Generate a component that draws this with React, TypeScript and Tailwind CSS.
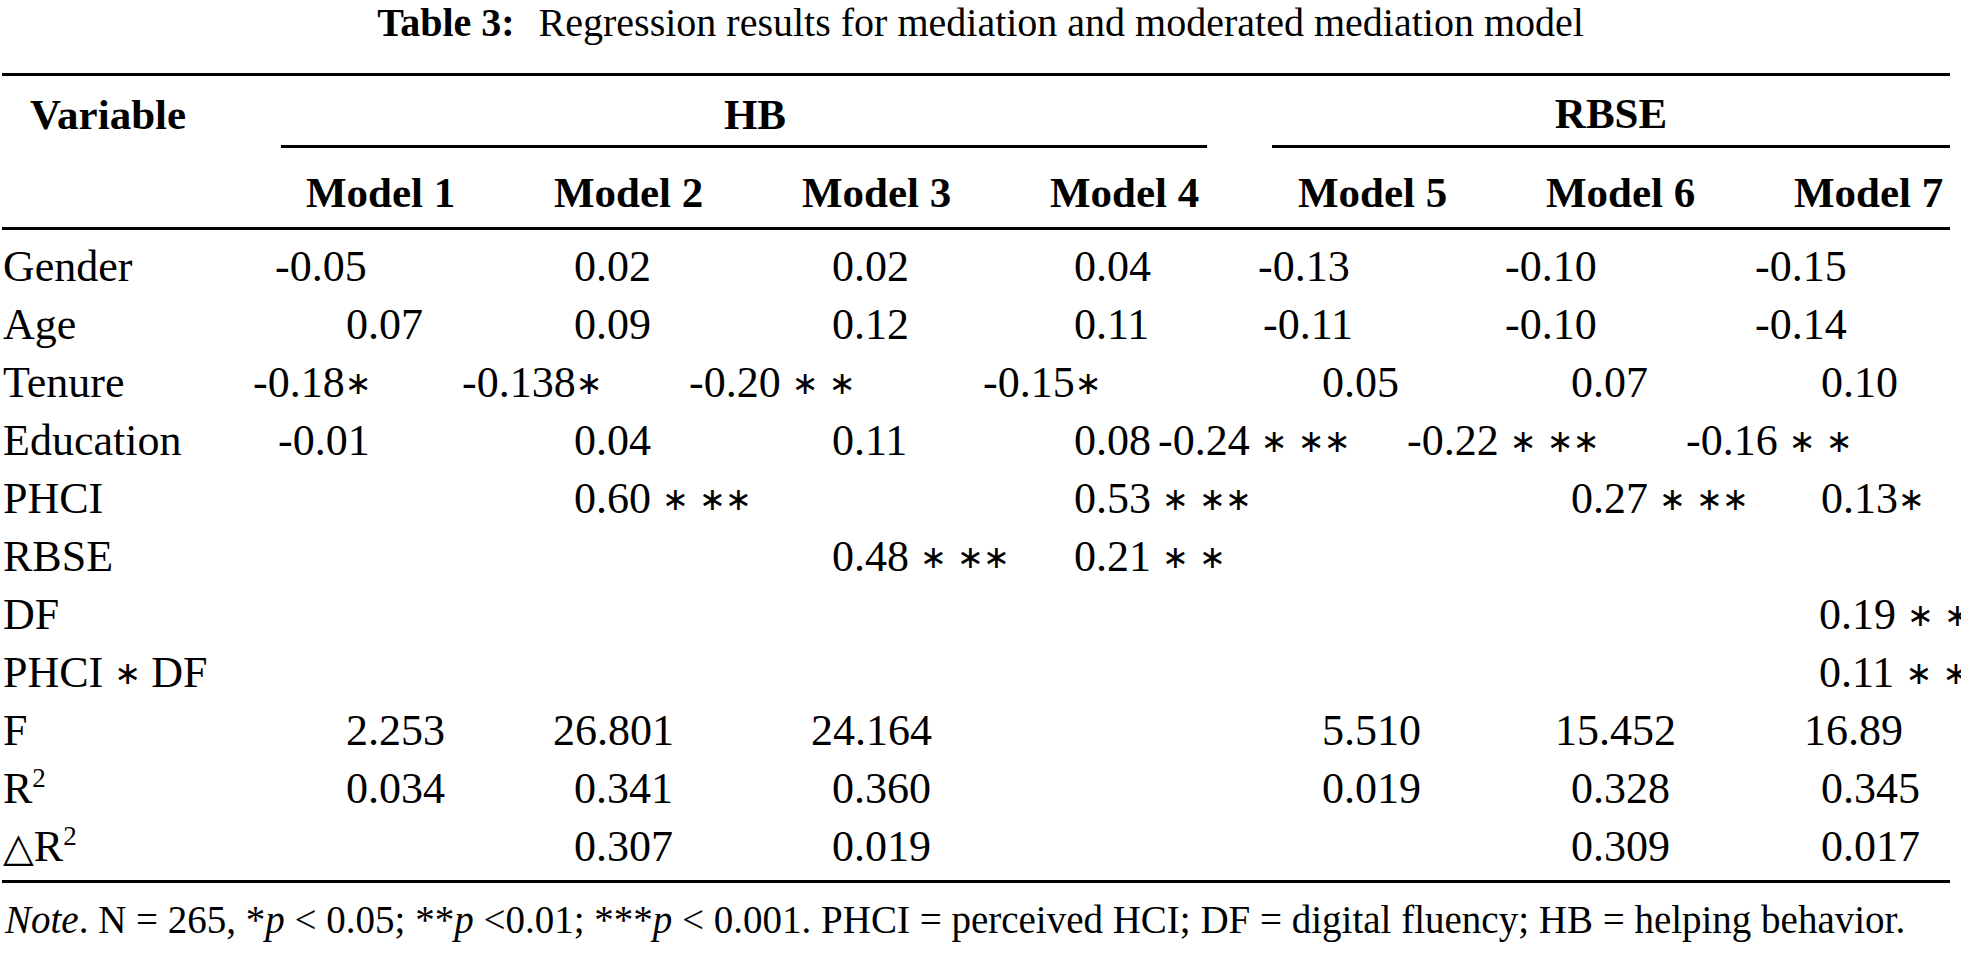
import React from "react";

type Cell = [string, string] | null;

interface Row {
    label: React.ReactNode;
    cells: Cell[];
}

// one star of the significance marks, centred on the math axis like in the PDF
function Star() {
    return (
        <span className="relative -top-[3px] inline-block w-[26px] text-center font-['DejaVu_Sans',sans-serif] text-[32px]">
            ∗
        </span>
    );
}

function Value({ text }: { text: string }) {
    const parts = text.split(/(∗)/);
    return (
        <>
            {parts.map((p, i) =>
                p === "∗" ? <Star key={i} /> : <span key={i}>{p}</span>
            )}
        </>
    );
}

const rows: Row[] = [
    {
        label: "Gender",
        cells: [
            ["-0.05", "ml-[25px]"],
            ["0.02", "ml-[76px]"],
            ["0.02", "ml-[86px]"],
            ["0.04", "ml-[80px]"],
            ["-0.13", "ml-[16px]"],
            ["-0.10", "ml-[15px]"],
            ["-0.15", "ml-[17px]"],
        ],
    },
    {
        label: "Age",
        cells: [
            ["0.07", "ml-[96px]"],
            ["0.09", "ml-[76px]"],
            ["0.12", "ml-[86px]"],
            ["0.11", "ml-[80px]"],
            ["-0.11", "ml-[21px]"],
            ["-0.10", "ml-[15px]"],
            ["-0.14", "ml-[17px]"],
        ],
    },
    {
        label: "Tenure",
        cells: [
            ["-0.18∗", "ml-[3px]"],
            ["-0.138∗", "-ml-[36px]"],
            ["-0.20 ∗ ∗", "-ml-[57px]"],
            ["-0.15∗", "-ml-[11px]"],
            ["0.05", "ml-[80px]"],
            ["0.07", "ml-[81px]"],
            ["0.10", "ml-[83px]"],
        ],
    },
    {
        label: "Education",
        cells: [
            ["-0.01", "ml-[28px]"],
            ["0.04", "ml-[76px]"],
            ["0.11", "ml-[86px]"],
            ["0.08", "ml-[80px]"],
            ["-0.24 ∗ ∗∗", "-ml-[84px]"],
            ["-0.22 ∗ ∗∗", "-ml-[83px]"],
            ["-0.16 ∗ ∗", "-ml-[52px]"],
        ],
    },
    {
        label: "PHCI",
        cells: [
            null,
            ["0.60 ∗ ∗∗", "ml-[76px]"],
            null,
            ["0.53 ∗ ∗∗", "ml-[80px]"],
            null,
            ["0.27 ∗ ∗∗", "ml-[81px]"],
            ["0.13∗", "ml-[83px]"],
        ],
    },
    {
        label: "RBSE",
        cells: [null, null, ["0.48 ∗ ∗∗", "ml-[86px]"], ["0.21 ∗ ∗", "ml-[80px]"], null, null, null],
    },
    {
        label: "DF",
        cells: [null, null, null, null, null, null, ["0.19 ∗ ∗", "ml-[81px]"]],
    },
    {
        label: (
            <>
                PHCI <Star /> DF
            </>
        ),
        cells: [null, null, null, null, null, null, ["0.11 ∗ ∗", "ml-[81px]"]],
    },
    {
        label: "F",
        cells: [
            ["2.253", "ml-[96px]"],
            ["26.801", "ml-[55px]"],
            ["24.164", "ml-[65px]"],
            null,
            ["5.510", "ml-[80px]"],
            ["15.452", "ml-[65px]"],
            ["16.89", "ml-[66px]"],
        ],
    },
    {
        label: (
            <>
                R<sup className="relative -top-[16px] text-[27px]">2</sup>
            </>
        ),
        cells: [
            ["0.034", "ml-[96px]"],
            ["0.341", "ml-[76px]"],
            ["0.360", "ml-[86px]"],
            null,
            ["0.019", "ml-[80px]"],
            ["0.328", "ml-[81px]"],
            ["0.345", "ml-[83px]"],
        ],
    },
    {
        label: (
            <>
                <span className="inline-block font-['DejaVu_Sans',sans-serif] text-[40px]">△</span>R
                <sup className="relative -top-[16px] text-[27px]">2</sup>
            </>
        ),
        cells: [
            null,
            ["0.307", "ml-[76px]"],
            ["0.019", "ml-[86px]"],
            null,
            null,
            ["0.309", "ml-[81px]"],
            ["0.017", "ml-[83px]"],
        ],
    },
];

const models = ["Model 1", "Model 2", "Model 3", "Model 4", "Model 5", "Model 6", "Model 7"];

export default function App() {
    return (
        <div className="h-[960px] w-[1961px] overflow-hidden bg-white font-['Liberation_Serif','DejaVu_Serif',serif] text-black">
            {/* Titre */}
            <div className="text-center text-[40px] leading-[45px]">
                <span className="font-bold">Table 3:</span>
                <span className="ml-[24px]">Regression results for mediation and moderated mediation model</span>
            </div>

            {/* Tableau */}
            <div className="ml-[2px] mt-[28px] w-[1948px] border-t-[3px] border-black">
                {/* En-tête : groupes */}
                <div className="flex h-[72px] text-[43px] font-bold leading-[48px]">
                    <div className="w-[279px] pl-[28px] pt-[15px]">Variable</div>
                    <div className="w-[926px] border-b-[3px] border-black pl-[22px] pt-[15px] text-center">HB</div>
                    <div className="ml-[65px] flex-1 border-b-[3px] border-black pt-[14px] text-center">RBSE</div>
                </div>

                {/* En-tête : modèles */}
                <div className="grid h-[82px] grid-cols-[repeat(7,248px)_1fr] border-b-[3px] border-black pt-[21px] text-[43px] font-bold leading-[48px]">
                    <div />
                    {models.map((m) => (
                        <div key={m} className="whitespace-nowrap pl-[56px]">
                            {m}
                        </div>
                    ))}
                </div>

                {/* Corps */}
                <div className="border-b-[3px] border-black pb-[4px] pt-[8px] text-[44px] leading-[58px]">
                    {rows.map((row, i) => (
                        <div key={i} className="grid h-[58px] grid-cols-[repeat(7,248px)_1fr]">
                            <div className="whitespace-nowrap pl-[1px]">{row.label}</div>
                            {row.cells.map((c, j) => (
                                <div key={j} className="whitespace-nowrap">
                                    {c && (
                                        <span className={`inline-block ${c[1]}`}>
                                            <Value text={c[0]} />
                                        </span>
                                    )}
                                </div>
                            ))}
                        </div>
                    ))}
                </div>
            </div>

            {/* Note */}
            <div className="ml-[5px] mt-[14px] whitespace-nowrap text-[39px] leading-[45px]">
                <i>Note</i>. N = 265, *<i>p</i> &lt; 0.05; **<i>p</i> &lt;0.01; ***<i>p</i> &lt; 0.001. PHCI = perceived HCI; DF = digital fluency; HB = helping behavior.
            </div>
        </div>
    );
}
